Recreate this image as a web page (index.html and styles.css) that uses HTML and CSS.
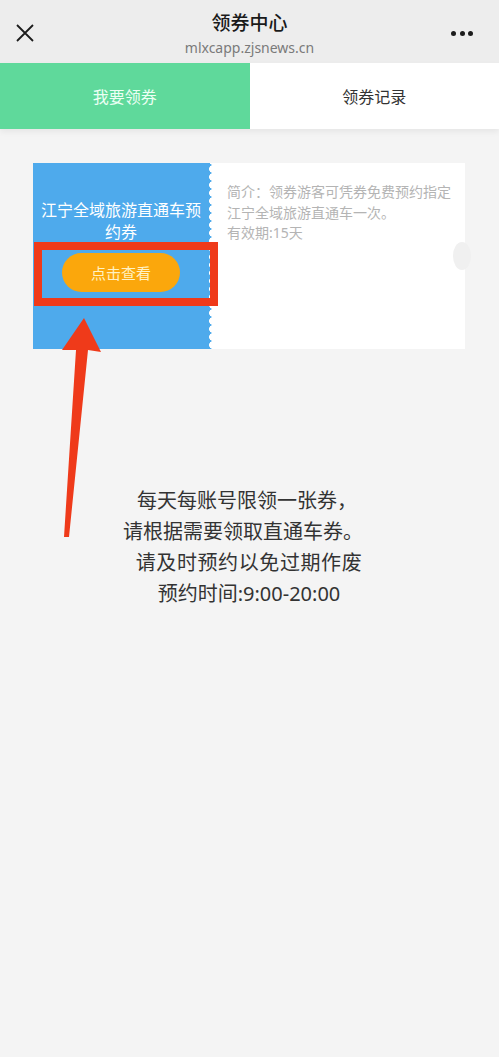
FILE: index.html
```html
<!DOCTYPE html>
<html lang="zh">
<head>
<meta charset="utf-8">
<title>领券中心</title>
<link rel="stylesheet" href="styles.css">
</head>
<body>
<header class="topbar">
  <div class="close">
    <svg width="18" height="18" viewBox="0 0 18 18"><path d="M1 1 L17 17 M17 1 L1 17" stroke="#1c1c1c" stroke-width="1.8" fill="none"/></svg>
  </div>
  <div class="titles">
    <div class="title">领券中心</div>
    <div class="url">mlxcapp.zjsnews.cn</div>
  </div>
  <div class="more"><span></span><span></span><span></span></div>
</header>
<nav class="tabs">
  <div class="tab active">我要领券</div>
  <div class="tab">领券记录</div>
</nav>
<main class="content">
  <div class="coupon">
    <div class="coupon-left">
      <div class="coupon-name">江宁全域旅游直通车预<br>约券</div>
      <div class="btn">点击查看</div>
    </div>
    <div class="coupon-right">
      <p>简介：领券游客可凭券免费预约指定江宁全域旅游直通车一次。</p>
      <p>有效期:15天</p>
    </div>
    <div class="mark-box"></div>
  </div>
  <div class="notice">
    <p class="l1">每天每账号限领一张券，</p>
    <p class="l2">请根据需要领取直通车券。</p>
    <p class="l3">请及时预约以免过期作废</p>
    <p class="l4">预约时间:9:00-20:00</p>
  </div>
</main>
<svg class="arrow" width="499" height="1057" viewBox="0 0 499 1057">
  <polygon points="84,318 101,352 88,350 69,537 64,537 76,350 62,350" fill="#ef3a1a"/>
</svg>
</body>
</html>
```
FILE: styles.css
```css
* { box-sizing: border-box; }
html, body { margin: 0; padding: 0; }
body {
  position: relative;
  min-height: 1057px;
  background: #f4f4f4;
  font-family: "Noto Sans", "Noto Sans CJK SC", sans-serif;
  color: #333;
}
.topbar {
  height: 63px;
  background: #ededed;
  display: flex;
  align-items: flex-start;
  justify-content: space-between;
}
.close { width: 60px; padding: 24px 0 0 16px; }
.close svg { display: block; }
.titles {
  flex: 1;
  display: flex;
  flex-direction: column;
  align-items: center;
  padding-top: 10px;
}
.title {
  font-size: 19px;
  line-height: 26px;
  color: #1a1a1a;
  font-weight: 500;
}
.url {
  font-size: 14px;
  line-height: 20px;
  color: #7a7a7a;
  margin-top: 2px;
}
.more {
  width: 60px;
  display: flex;
  justify-content: flex-end;
  gap: 3.5px;
  padding: 31px 26px 0 0;
}
.more span {
  width: 5px; height: 5px; border-radius: 50%;
  background: #1c1c1c;
}
.tabs {
  display: flex;
  height: 66px;
  background: #fff;
  box-shadow: 0 3px 6px rgba(0,0,0,0.06);
}
.tab {
  flex: 1;
  display: flex;
  align-items: center;
  justify-content: center;
  font-size: 16px;
  color: #333;
}
.tab.active {
  background: #5fd99b;
  color: #ecfff4;
}
.content { padding: 34px 34px 0 33px; }
.coupon {
  position: relative;
  display: flex;
  height: 186px;
}
.coupon::after {
  content: "";
  position: absolute;
  right: -6px;
  top: 79px;
  width: 18px;
  height: 28px;
  border-radius: 50%;
  background: #f0f0f0;
}
.coupon-left {
  position: relative;
  width: 180px;
  background: #4eaaec;
  padding: 36px 10px 0 6px;
  display: flex;
  flex-direction: column;
  align-items: center;
}
.coupon-left::after {
  content: "";
  position: absolute;
  right: 0;
  top: 0;
  bottom: 0;
  width: 5px;
  background: radial-gradient(circle at 100% 50%, #fff 3.6px, rgba(255,255,255,0) 4.2px) 0 2px / 5px 8px repeat-y;
}
.coupon-name {
  color: #fff;
  font-size: 16px;
  line-height: 22px;
  text-align: center;
}
.btn {
  margin-top: 10px;
  width: 118px;
  height: 39px;
  border-radius: 20px;
  background: #fba70c;
  color: #fff2c4;
  font-size: 15px;
  display: flex;
  align-items: center;
  justify-content: center;
}
.coupon-right {
  flex: 1;
  background: #fff;
  padding: 19px 10px 0 14px;
  font-size: 14px;
  line-height: 20.5px;
  color: #b4b4b4;
}
.coupon-right p { margin: 0; }
.mark-box {
  position: absolute;
  left: 1px;
  top: 79px;
  width: 184px;
  height: 64px;
  border: 8px solid #ef3a1a;
}
.notice {
  margin-top: 136px;
  font-size: 20px;
  line-height: 31px;
  color: #333;
  text-align: center;
}
.notice p { margin: 0; }
.notice .l1 { padding-right: 4px; }
.notice .l2 { padding-right: 12px; }
.notice .l3 { letter-spacing: 0.6px; }
.arrow {
  position: absolute;
  left: 0;
  top: 0;
  pointer-events: none;
}
```
